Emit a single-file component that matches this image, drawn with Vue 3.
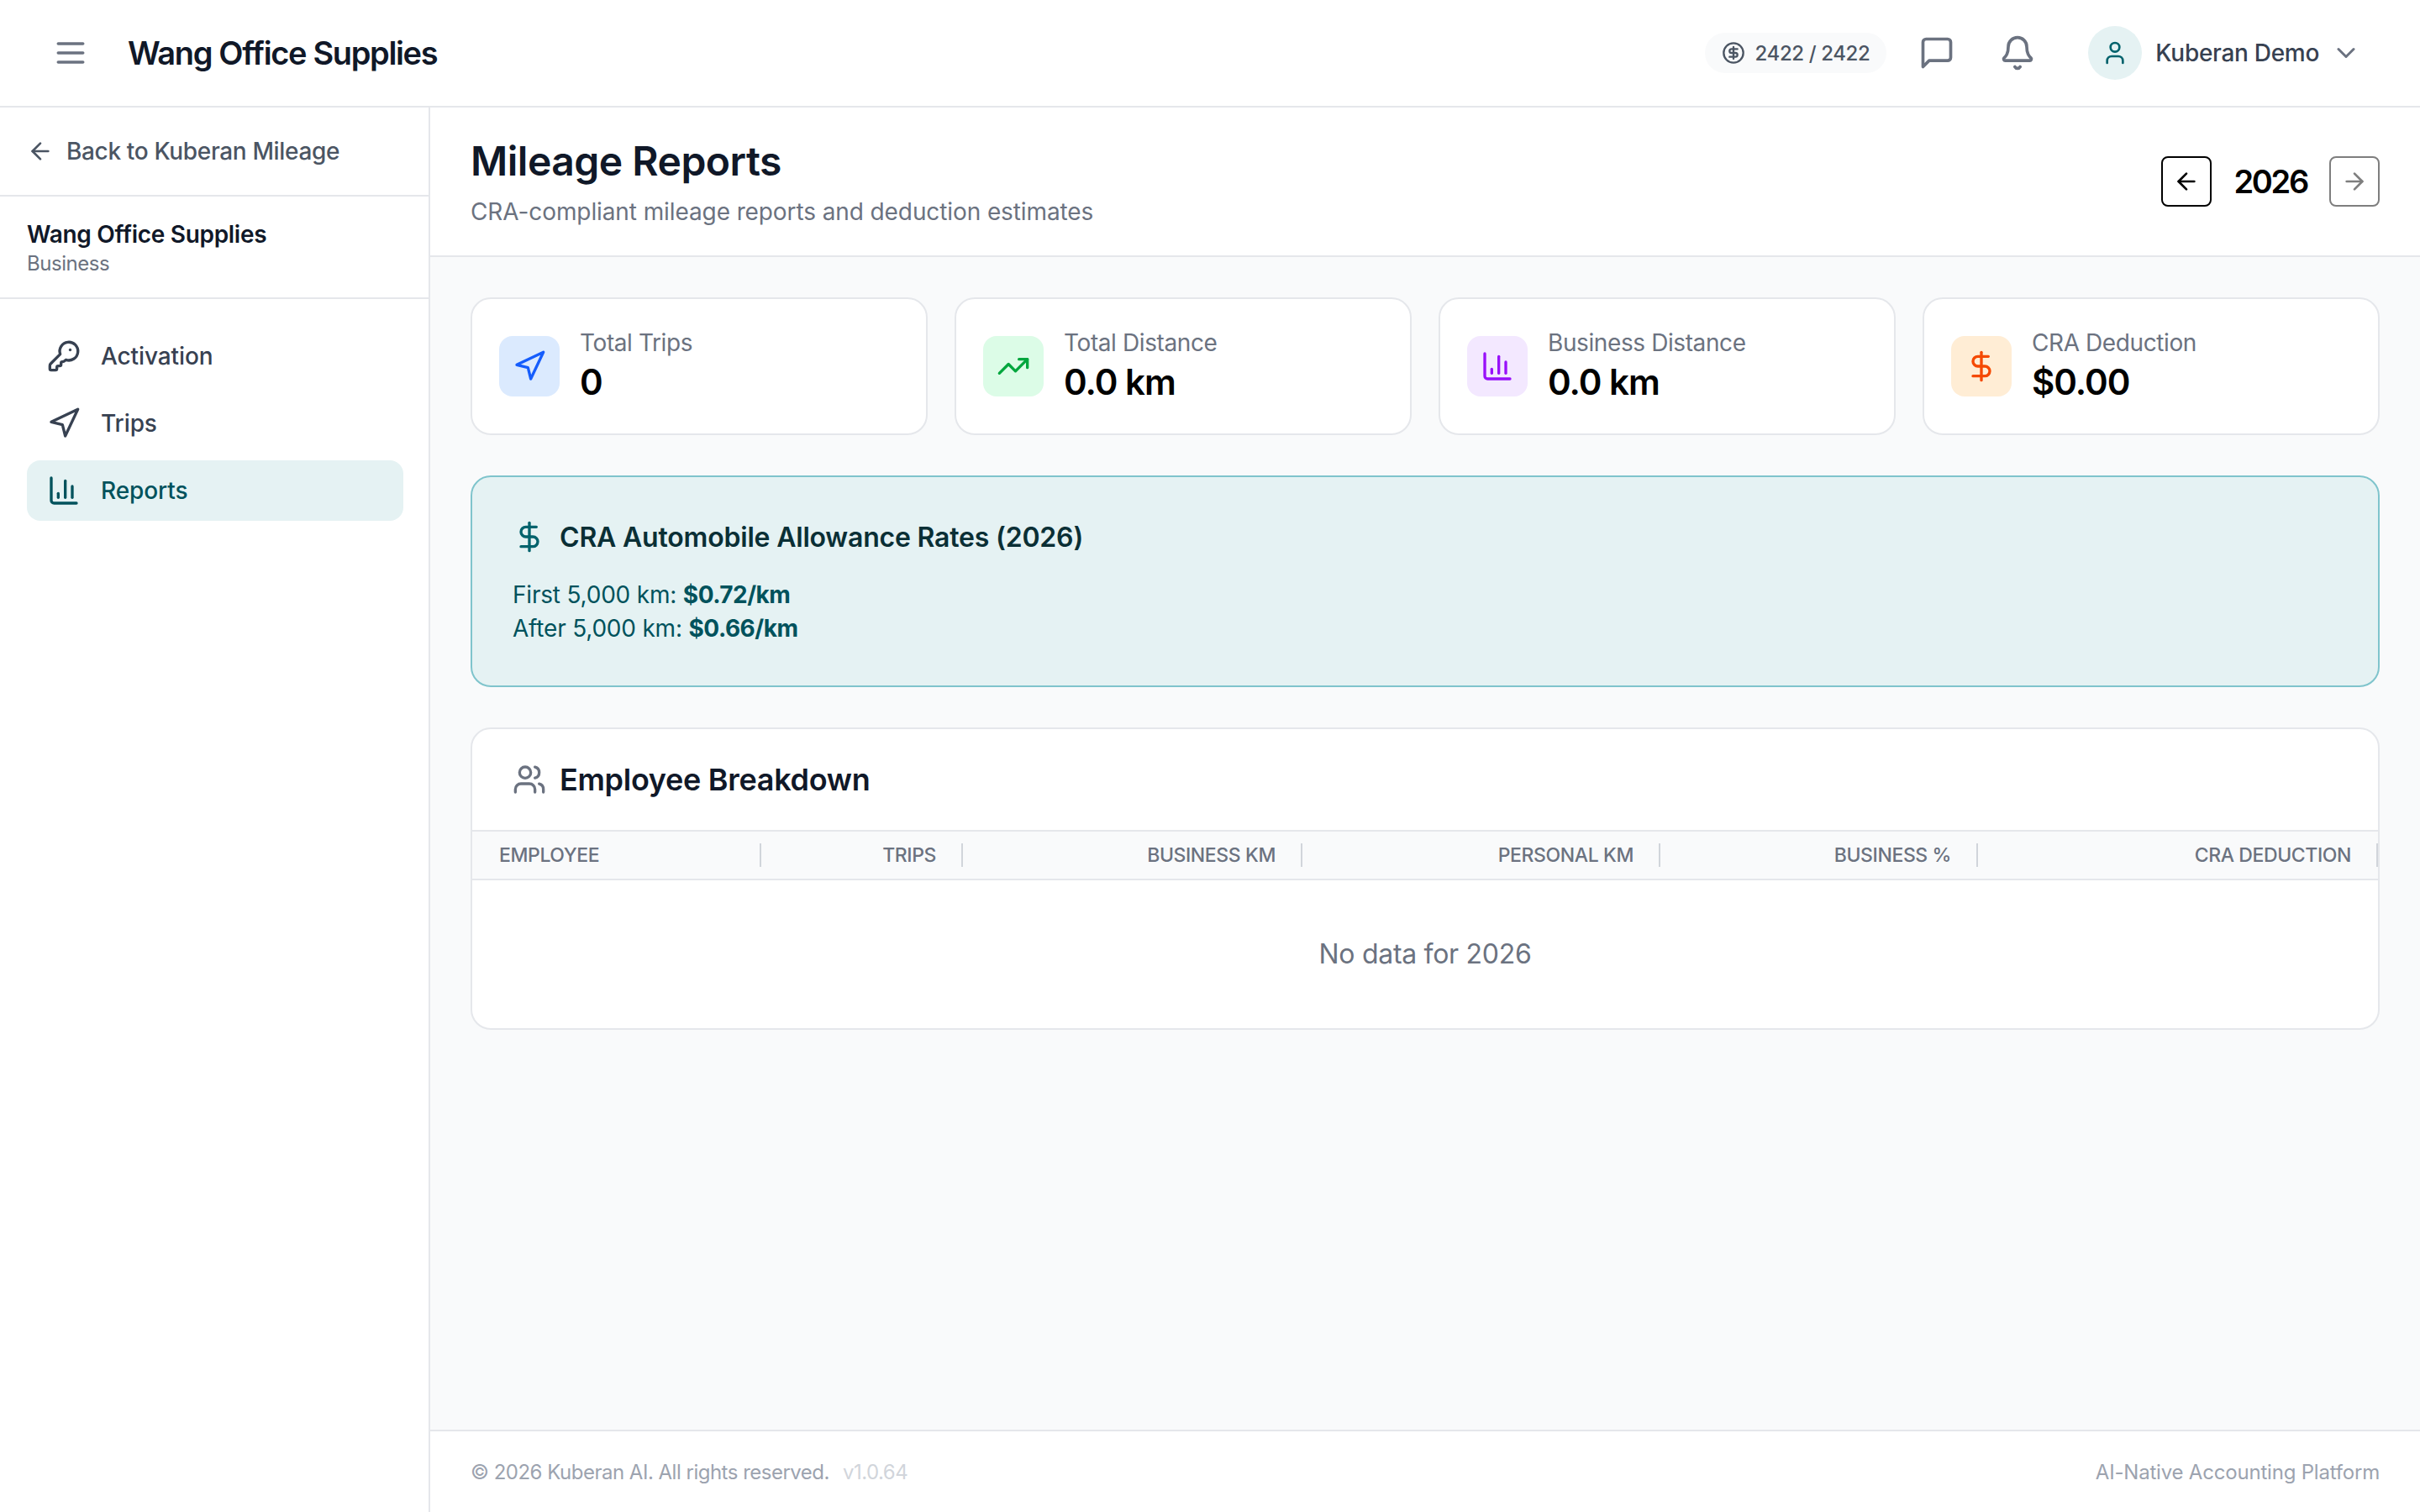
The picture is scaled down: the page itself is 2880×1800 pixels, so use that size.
<template>
    <div class="app">
        <header class="topbar">
            <div class="topbar-left">
                <svg class="icon menu-icon" viewBox="0 0 24 24"><path d="M4 12h16" /><path d="M4 18h16" /><path d="M4 6h16" /></svg>
                <span class="company">Wang Office Supplies</span>
            </div>
            <div class="topbar-right">
                <div class="credits">
                    <svg class="icon credits-icon" viewBox="0 0 24 24"><circle cx="12" cy="12" r="10" /><path d="M16 8h-6a2 2 0 1 0 0 4h4a2 2 0 1 1 0 4H8" /><path d="M12 18V6" /></svg>
                    <span>2422 / 2422</span>
                </div>
                <svg class="icon bar-icon message-icon" viewBox="0 0 24 24"><path d="M21 15a2 2 0 0 1-2 2H7l-4 4V5a2 2 0 0 1 2-2h14a2 2 0 0 1 2 2z" /></svg>
                <svg class="icon bar-icon bell-icon" viewBox="0 0 24 24"><path d="M10.268 21a2 2 0 0 0 3.464 0" /><path d="M3.262 15.326A1 1 0 0 0 4 17h16a1 1 0 0 0 .74-1.673C19.41 13.956 18 12.499 18 8A6 6 0 0 0 6 8c0 4.499-1.411 5.956-2.738 7.326" /></svg>
                <div class="user">
                    <div class="avatar">
                        <svg class="icon" viewBox="0 0 24 24"><path d="M19 21v-2a4 4 0 0 0-4-4H9a4 4 0 0 0-4 4v2" /><circle cx="12" cy="7" r="4" /></svg>
                    </div>
                    <span class="user-name">Kuberan Demo</span>
                    <svg class="icon chevron" viewBox="0 0 24 24"><path d="m6 9 6 6 6-6" /></svg>
                </div>
            </div>
        </header>

        <div class="body">
            <aside class="sidebar">
                <div class="back">
                    <svg class="icon back-icon" viewBox="0 0 24 24"><path d="m12 19-7-7 7-7" /><path d="M19 12H5" /></svg>
                    <span>Back to Kuberan Mileage</span>
                </div>
                <div class="org">
                    <div class="org-name">Wang Office Supplies</div>
                    <div class="org-type">Business</div>
                </div>
                <nav class="nav">
                    <div
                        v-for="item in navItems"
                        :key="item.label"
                        class="nav-item"
                        :class="{ active: item.active }"
                    >
                        <svg class="icon nav-icon" viewBox="0 0 24 24">
                            <path v-for="d in item.icon" :key="d" :d="d" />
                        </svg>
                        <span>{{ item.label }}</span>
                    </div>
                </nav>
            </aside>

            <main class="main">
                <section class="page-head">
                    <div>
                        <h1>Mileage Reports</h1>
                        <p>CRA-compliant mileage reports and deduction estimates</p>
                    </div>
                    <div class="year-nav">
                        <button class="year-btn">
                            <svg class="icon" viewBox="0 0 24 24"><path d="m12 19-7-7 7-7" /><path d="M19 12H5" /></svg>
                        </button>
                        <span class="year">2026</span>
                        <button class="year-btn disabled">
                            <svg class="icon" viewBox="0 0 24 24"><path d="M5 12h14" /><path d="m12 5 7 7-7 7" /></svg>
                        </button>
                    </div>
                </section>

                <section class="content">
                    <div class="stats">
                        <div v-for="stat in stats" :key="stat.label" class="stat-card">
                            <div class="stat-icon" :class="stat.tone">
                                <svg class="icon" viewBox="0 0 24 24">
                                    <path v-for="d in stat.icon" :key="d" :d="d" />
                                </svg>
                            </div>
                            <div class="stat-text">
                                <div class="stat-label">{{ stat.label }}</div>
                                <div class="stat-value">{{ stat.value }}</div>
                            </div>
                        </div>
                    </div>

                    <div class="rates">
                        <div class="rates-title">
                            <svg class="icon" viewBox="0 0 24 24"><path d="M12 2v20" /><path d="M17 5H9.5a3.5 3.5 0 0 0 0 7h5a3.5 3.5 0 0 1 0 7H6" /></svg>
                            <h2>CRA Automobile Allowance Rates (2026)</h2>
                        </div>
                        <p>First 5,000 km: <strong>$0.72/km</strong></p>
                        <p>After 5,000 km: <strong>$0.66/km</strong></p>
                    </div>

                    <div class="breakdown">
                        <div class="breakdown-title">
                            <svg class="icon" viewBox="0 0 24 24"><path d="M16 21v-2a4 4 0 0 0-4-4H6a4 4 0 0 0-4 4v2" /><circle cx="9" cy="7" r="4" /><path d="M22 21v-2a4 4 0 0 0-3-3.87" /><path d="M16 3.13a4 4 0 0 1 0 7.75" /></svg>
                            <h2>Employee Breakdown</h2>
                        </div>
                        <div class="table-head">
                            <div v-for="col in columns" :key="col" class="th">{{ col }}</div>
                        </div>
                        <div class="empty">No data for 2026</div>
                    </div>
                </section>

                <footer class="footer">
                    <div class="footer-left">
                        <span>© 2026 Kuberan AI. All rights reserved.</span>
                        <span class="version">v1.0.64</span>
                    </div>
                    <span>AI-Native Accounting Platform</span>
                </footer>
            </main>
        </div>
    </div>
</template>

<script setup>
const navigation = ['M3 11 22 2 13 21 11 13 3 11Z']
const chart = ['M3 3v16a2 2 0 0 0 2 2h16', 'M18 17V9', 'M13 17V5', 'M8 17v-3']

const navItems = [
    {
        label: 'Activation',
        icon: [
            'M2.586 17.414A2 2 0 0 0 2 18.828V21a1 1 0 0 0 1 1h3a1 1 0 0 0 1-1v-1a1 1 0 0 1 1-1h1a1 1 0 0 0 1-1v-1a1 1 0 0 1 1-1h.172a2 2 0 0 0 1.414-.586l.814-.814a6.5 6.5 0 1 0-4-4z',
            'M16.5 7.5h.01'
        ]
    },
    { label: 'Trips', icon: navigation },
    { label: 'Reports', icon: chart, active: true }
]

const stats = [
    { label: 'Total Trips', value: '0', tone: 'blue', icon: navigation },
    { label: 'Total Distance', value: '0.0 km', tone: 'green', icon: ['M16 7h6v6', 'm22 7-8.5 8.5-5-5L2 17'] },
    { label: 'Business Distance', value: '0.0 km', tone: 'purple', icon: chart },
    {
        label: 'CRA Deduction',
        value: '$0.00',
        tone: 'orange',
        icon: ['M12 2v20', 'M17 5H9.5a3.5 3.5 0 0 0 0 7h5a3.5 3.5 0 0 1 0 7H6']
    }
]

const columns = ['Employee', 'Trips', 'Business km', 'Personal km', 'Business %', 'CRA Deduction']
</script>

<style>
html,
body {
    margin: 0;
    background: #fff;
}
</style>

<style scoped>
.app {
    width: 2880px;
    height: 1800px;
    display: flex;
    flex-direction: column;
    overflow: hidden;
    font-family: Inter, 'Liberation Sans', sans-serif;
    color: #101828;
    background: #fff;
}

.icon {
    fill: none;
    stroke: currentColor;
    stroke-width: 2;
    stroke-linecap: round;
    stroke-linejoin: round;
    flex-shrink: 0;
}

.topbar {
    height: 128px;
    box-sizing: border-box;
    flex-shrink: 0;
    display: flex;
    align-items: center;
    justify-content: space-between;
    border-bottom: 2px solid #e5e7eb;
    padding: 0 48px 0 62px;
}

.topbar-left {
    display: flex;
    align-items: center;
    gap: 46px;
}

.menu-icon {
    width: 44px;
    height: 44px;
    color: #6b7280;
}

.company {
    font-size: 38px;
    font-weight: 600;
    letter-spacing: -1.35px;
}

.topbar-right {
    display: flex;
    align-items: center;
}

.credits {
    display: flex;
    align-items: center;
    gap: 12px;
    height: 48px;
    padding: 0 20px;
    border-radius: 24px;
    background: #f9fafb;
    color: #4b5563;
    font-size: 24px;
    font-weight: 500;
    letter-spacing: -0.4px;
}

.credits-icon {
    width: 28px;
    height: 28px;
}

.bar-icon {
    width: 44px;
    height: 44px;
    color: #6b7280;
}

.message-icon {
    margin-left: 38px;
}

.bell-icon {
    margin-left: 52px;
}

.user {
    display: flex;
    align-items: center;
    margin-left: 62px;
}

.avatar {
    width: 64px;
    height: 64px;
    border-radius: 50%;
    background: #e5f2f3;
    display: flex;
    align-items: center;
    justify-content: center;
    color: #00626c;
}

.avatar .icon {
    width: 32px;
    height: 32px;
}

.user-name {
    margin-left: 16px;
    font-size: 28px;
    font-weight: 500;
    color: #374151;
    letter-spacing: -0.3px;
}

.chevron {
    width: 36px;
    height: 36px;
    margin-left: 14px;
    margin-right: 22px;
    color: #6b7280;
}

.body {
    flex: 1;
    min-height: 0;
    display: flex;
}

.sidebar {
    width: 512px;
    box-sizing: border-box;
    flex-shrink: 0;
    border-right: 2px solid #e5e7eb;
}

.back {
    height: 106px;
    box-sizing: border-box;
    border-bottom: 2px solid #e5e7eb;
    display: flex;
    align-items: center;
    gap: 15px;
    padding-left: 32px;
    color: #4b5563;
    font-size: 28px;
    font-weight: 500;
    letter-spacing: -0.35px;
}

.back-icon {
    width: 32px;
    height: 32px;
}

.org {
    height: 122px;
    box-sizing: border-box;
    border-bottom: 2px solid #e5e7eb;
    padding: 26px 32px 0;
}

.org-name {
    font-size: 28px;
    line-height: 38px;
    font-weight: 600;
    letter-spacing: -0.3px;
}

.org-type {
    font-size: 24px;
    line-height: 32px;
    color: #6b7280;
    letter-spacing: -0.45px;
}

.nav {
    display: flex;
    flex-direction: column;
    gap: 8px;
    padding: 32px 30px 0 32px;
}

.nav-item {
    height: 72px;
    display: flex;
    align-items: center;
    gap: 24px;
    padding-left: 24px;
    border-radius: 16px;
    color: #374151;
    font-size: 28px;
    font-weight: 500;
    letter-spacing: -0.1px;
}

.nav-item.active {
    background: #e5f2f3;
    color: #00525c;
}

.nav-icon {
    width: 40px;
    height: 40px;
}

.main {
    flex: 1;
    min-width: 0;
    display: flex;
    flex-direction: column;
}

.page-head {
    height: 178px;
    box-sizing: border-box;
    flex-shrink: 0;
    border-bottom: 2px solid #e5e7eb;
    padding: 0 48px;
    display: flex;
    align-items: center;
    justify-content: space-between;
}

.page-head h1 {
    margin: 0;
    font-size: 48px;
    line-height: 64px;
    font-weight: 600;
    letter-spacing: -0.5px;
}

.page-head p {
    margin: 8px 0 0;
    font-size: 28px;
    line-height: 40px;
    color: #6b7280;
    letter-spacing: -0.1px;
}

.year-nav {
    display: flex;
    align-items: center;
    gap: 26px;
}

.year-btn {
    width: 60px;
    height: 60px;
    padding: 0;
    border: 2px solid #000;
    border-radius: 8px;
    background: #fff;
    color: #000;
    display: flex;
    align-items: center;
    justify-content: center;
}

.year-btn.disabled {
    opacity: 0.5;
}

.year-btn .icon {
    width: 32px;
    height: 32px;
}

.year {
    font-size: 38px;
    font-weight: 600;
    color: #000;
    letter-spacing: -2.3px;
}

.content {
    flex: 1;
    min-height: 0;
    box-sizing: border-box;
    padding: 48px;
    background: #f9fafb;
    display: flex;
    flex-direction: column;
    gap: 48px;
}

.stats {
    display: grid;
    grid-template-columns: repeat(4, 1fr);
    gap: 32px;
}

.stat-card {
    height: 164px;
    box-sizing: border-box;
    display: flex;
    align-items: center;
    gap: 24px;
    padding: 0 32px;
    background: #fff;
    border: 2px solid #e5e7eb;
    border-radius: 24px;
}

.stat-icon {
    width: 72px;
    height: 72px;
    border-radius: 16px;
    display: flex;
    align-items: center;
    justify-content: center;
}

.stat-icon .icon {
    width: 40px;
    height: 40px;
}

.blue {
    background: #dbeafe;
    color: #155dfc;
}

.green {
    background: #dcfce7;
    color: #00a63e;
}

.purple {
    background: #f3e8ff;
    color: #9810fa;
}

.orange {
    background: #ffedd5;
    color: #f54900;
}

.stat-text {
    padding-bottom: 3px;
}

.stat-label {
    font-size: 28px;
    line-height: 40px;
    color: #6b7280;
    letter-spacing: -0.4px;
}

.stat-value {
    margin-top: 1px;
    font-size: 42px;
    line-height: 52px;
    font-weight: 600;
    color: #000;
    letter-spacing: -1px;
}

.rates {
    height: 252px;
    box-sizing: border-box;
    padding: 48px;
    background: #e5f2f3;
    border: 2px solid #7fc4cc;
    border-radius: 24px;
    color: #00525c;
}

.rates-title {
    display: flex;
    align-items: center;
    gap: 16px;
    height: 46px;
    margin-bottom: 26px;
}

.rates-title .icon {
    width: 40px;
    height: 40px;
    color: #00626c;
}

.rates-title h2 {
    margin: 0;
    font-size: 32px;
    font-weight: 600;
    color: #0a2f35;
    letter-spacing: -0.2px;
}

.rates p {
    margin: 0;
    font-size: 28px;
    line-height: 40px;
    letter-spacing: -0.2px;
}

.rates strong {
    font-weight: 700;
    letter-spacing: -0.5px;
}

.breakdown {
    height: 360px;
    box-sizing: border-box;
    background: #fff;
    border: 2px solid #e5e7eb;
    border-radius: 24px;
    overflow: hidden;
}

.breakdown-title {
    height: 120px;
    display: flex;
    align-items: center;
    gap: 16px;
    padding-left: 48px;
}

.breakdown-title .icon {
    width: 40px;
    height: 40px;
    color: #6b7280;
}

.breakdown-title h2 {
    margin: 0;
    font-size: 36px;
    font-weight: 600;
    letter-spacing: -0.3px;
}

.table-head {
    height: 60px;
    box-sizing: border-box;
    display: grid;
    grid-template-columns: 344px 240px 404px 426px 378px 476px;
    align-items: center;
    background: #f9fafb;
    border-top: 2px solid #e5e7eb;
    border-bottom: 2px solid #e5e7eb;
}

.th {
    position: relative;
    padding: 0 32px;
    text-align: right;
    text-transform: uppercase;
    font-size: 23px;
    font-weight: 500;
    color: #6b7280;
    letter-spacing: -0.4px;
}

.th:first-child {
    text-align: left;
}

.th::after {
    content: '';
    position: absolute;
    right: 0;
    top: 50%;
    width: 2px;
    height: 28px;
    margin-top: -14px;
    background: #d1d5db;
}

.empty {
    height: 174px;
    padding-bottom: 2px;
    display: flex;
    align-items: center;
    justify-content: center;
    font-size: 32px;
    color: #6b7280;
    letter-spacing: -0.3px;
}

.footer {
    height: 98px;
    box-sizing: border-box;
    flex-shrink: 0;
    border-top: 2px solid #e5e7eb;
    padding: 0 48px;
    display: flex;
    align-items: center;
    justify-content: space-between;
    background: #fff;
    font-size: 24px;
    color: #9ca3af;
    letter-spacing: -0.2px;
}

.footer-left {
    display: flex;
    gap: 16px;
    letter-spacing: -0.5px;
}

.version {
    color: #d1d5db;
}
</style>
